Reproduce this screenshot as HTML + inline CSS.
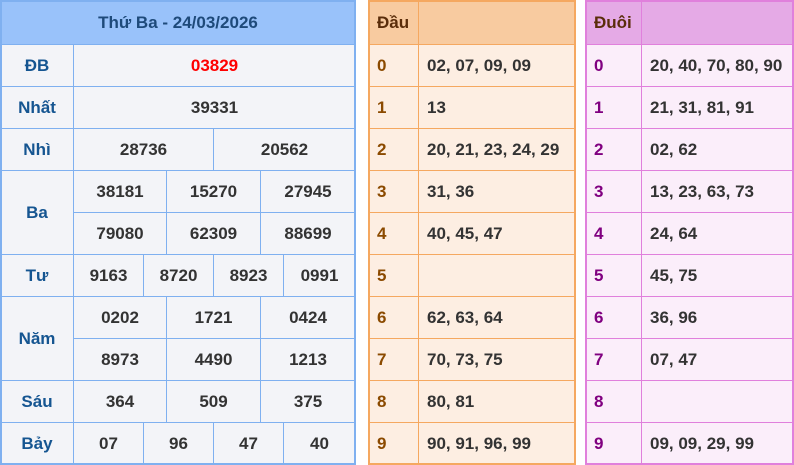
<!DOCTYPE html><html><head><meta charset="utf-8"><style>
body{margin:0;width:794px;height:465px;background:#fff;position:relative;overflow:hidden;font-family:"Liberation Sans",sans-serif}
.c{position:absolute;box-sizing:border-box;border:1px solid #7fb0f0;background:#f3f4f8;display:flex;align-items:center;justify-content:center;font-weight:bold;font-size:17px;color:#333}
.l{color:#155591}
.h{background:#99c2fa;color:#1e4a7a}
.f{position:absolute;box-sizing:border-box;border:2px solid #7fb0f0;pointer-events:none}
.o{border-color:#f5a860;background:#fdeee2;justify-content:flex-start;padding-left:8px}
.o.h2{background:#f8cba0;color:#5a2d0a}
.o.d{color:#8b4a00}
.p{border-color:#e080dc;background:#fbeefa;justify-content:flex-start;padding-left:8px}
.p.h2{background:#e5aae6;color:#5a2d0a}
.p.d{color:#800080}
</style></head><body>
<div class="c h" style="left:0;top:0;width:356px;height:45px">Thứ Ba - 24/03/2026</div>
<div class="c l" style="left:0;top:44px;width:74px;height:43px">ĐB</div>
<div class="c" style="left:73px;top:44px;width:283px;height:43px;color:#f00">03829</div>
<div class="c l" style="left:0;top:86px;width:74px;height:43px">Nhất</div>
<div class="c" style="left:73px;top:86px;width:283px;height:43px">39331</div>
<div class="c l" style="left:0;top:128px;width:74px;height:43px">Nhì</div>
<div class="c" style="left:73px;top:128px;width:141px;height:43px">28736</div>
<div class="c" style="left:213px;top:128px;width:143px;height:43px">20562</div>
<div class="c l" style="left:0;top:170px;width:74px;height:85px">Ba</div>
<div class="c" style="left:73px;top:170px;width:94px;height:43px">38181</div>
<div class="c" style="left:166px;top:170px;width:95px;height:43px">15270</div>
<div class="c" style="left:260px;top:170px;width:96px;height:43px">27945</div>
<div class="c" style="left:73px;top:212px;width:94px;height:43px">79080</div>
<div class="c" style="left:166px;top:212px;width:95px;height:43px">62309</div>
<div class="c" style="left:260px;top:212px;width:96px;height:43px">88699</div>
<div class="c l" style="left:0;top:254px;width:74px;height:43px">Tư</div>
<div class="c" style="left:73px;top:254px;width:71px;height:43px">9163</div>
<div class="c" style="left:143px;top:254px;width:71px;height:43px">8720</div>
<div class="c" style="left:213px;top:254px;width:71px;height:43px">8923</div>
<div class="c" style="left:283px;top:254px;width:73px;height:43px">0991</div>
<div class="c l" style="left:0;top:296px;width:74px;height:85px">Năm</div>
<div class="c" style="left:73px;top:296px;width:94px;height:43px">0202</div>
<div class="c" style="left:166px;top:296px;width:95px;height:43px">1721</div>
<div class="c" style="left:260px;top:296px;width:96px;height:43px">0424</div>
<div class="c" style="left:73px;top:338px;width:94px;height:43px">8973</div>
<div class="c" style="left:166px;top:338px;width:95px;height:43px">4490</div>
<div class="c" style="left:260px;top:338px;width:96px;height:43px">1213</div>
<div class="c l" style="left:0;top:380px;width:74px;height:43px">Sáu</div>
<div class="c" style="left:73px;top:380px;width:94px;height:43px">364</div>
<div class="c" style="left:166px;top:380px;width:95px;height:43px">509</div>
<div class="c" style="left:260px;top:380px;width:96px;height:43px">375</div>
<div class="c l" style="left:0;top:422px;width:74px;height:43px">Bảy</div>
<div class="c" style="left:73px;top:422px;width:71px;height:43px">07</div>
<div class="c" style="left:143px;top:422px;width:71px;height:43px">96</div>
<div class="c" style="left:213px;top:422px;width:71px;height:43px">47</div>
<div class="c" style="left:283px;top:422px;width:73px;height:43px">40</div>
<div class="f" style="left:0;top:0;width:356px;height:465px"></div>

<div class="c o h2" style="left:368px;top:0;width:52px;height:45px">Đầu</div>
<div class="c o h2" style="left:418px;top:0;width:158px;height:45px"></div>
<div class="c o d" style="left:368px;top:44px;width:52px;height:43px">0</div><div class="c o" style="left:418px;top:44px;width:158px;height:43px">02, 07, 09, 09</div>
<div class="c o d" style="left:368px;top:86px;width:52px;height:43px">1</div><div class="c o" style="left:418px;top:86px;width:158px;height:43px">13</div>
<div class="c o d" style="left:368px;top:128px;width:52px;height:43px">2</div><div class="c o" style="left:418px;top:128px;width:158px;height:43px">20, 21, 23, 24, 29</div>
<div class="c o d" style="left:368px;top:170px;width:52px;height:43px">3</div><div class="c o" style="left:418px;top:170px;width:158px;height:43px">31, 36</div>
<div class="c o d" style="left:368px;top:212px;width:52px;height:43px">4</div><div class="c o" style="left:418px;top:212px;width:158px;height:43px">40, 45, 47</div>
<div class="c o d" style="left:368px;top:254px;width:52px;height:43px">5</div><div class="c o" style="left:418px;top:254px;width:158px;height:43px"></div>
<div class="c o d" style="left:368px;top:296px;width:52px;height:43px">6</div><div class="c o" style="left:418px;top:296px;width:158px;height:43px">62, 63, 64</div>
<div class="c o d" style="left:368px;top:338px;width:52px;height:43px">7</div><div class="c o" style="left:418px;top:338px;width:158px;height:43px">70, 73, 75</div>
<div class="c o d" style="left:368px;top:380px;width:52px;height:43px">8</div><div class="c o" style="left:418px;top:380px;width:158px;height:43px">80, 81</div>
<div class="c o d" style="left:368px;top:422px;width:52px;height:43px">9</div><div class="c o" style="left:418px;top:422px;width:158px;height:43px">90, 91, 96, 99</div>
<div class="f" style="left:368px;top:0;width:208px;height:465px;border-color:#f5a860"></div>

<div class="c p h2" style="left:585px;top:0;width:58px;height:45px">Đuôi</div>
<div class="c p h2" style="left:641px;top:0;width:153px;height:45px"></div>
<div class="c p d" style="left:585px;top:44px;width:58px;height:43px">0</div><div class="c p" style="left:641px;top:44px;width:153px;height:43px">20, 40, 70, 80, 90</div>
<div class="c p d" style="left:585px;top:86px;width:58px;height:43px">1</div><div class="c p" style="left:641px;top:86px;width:153px;height:43px">21, 31, 81, 91</div>
<div class="c p d" style="left:585px;top:128px;width:58px;height:43px">2</div><div class="c p" style="left:641px;top:128px;width:153px;height:43px">02, 62</div>
<div class="c p d" style="left:585px;top:170px;width:58px;height:43px">3</div><div class="c p" style="left:641px;top:170px;width:153px;height:43px">13, 23, 63, 73</div>
<div class="c p d" style="left:585px;top:212px;width:58px;height:43px">4</div><div class="c p" style="left:641px;top:212px;width:153px;height:43px">24, 64</div>
<div class="c p d" style="left:585px;top:254px;width:58px;height:43px">5</div><div class="c p" style="left:641px;top:254px;width:153px;height:43px">45, 75</div>
<div class="c p d" style="left:585px;top:296px;width:58px;height:43px">6</div><div class="c p" style="left:641px;top:296px;width:153px;height:43px">36, 96</div>
<div class="c p d" style="left:585px;top:338px;width:58px;height:43px">7</div><div class="c p" style="left:641px;top:338px;width:153px;height:43px">07, 47</div>
<div class="c p d" style="left:585px;top:380px;width:58px;height:43px">8</div><div class="c p" style="left:641px;top:380px;width:153px;height:43px"></div>
<div class="c p d" style="left:585px;top:422px;width:58px;height:43px">9</div><div class="c p" style="left:641px;top:422px;width:153px;height:43px">09, 09, 29, 99</div>
<div class="f" style="left:585px;top:0;width:209px;height:465px;border-color:#e080dc"></div>
</body></html>
